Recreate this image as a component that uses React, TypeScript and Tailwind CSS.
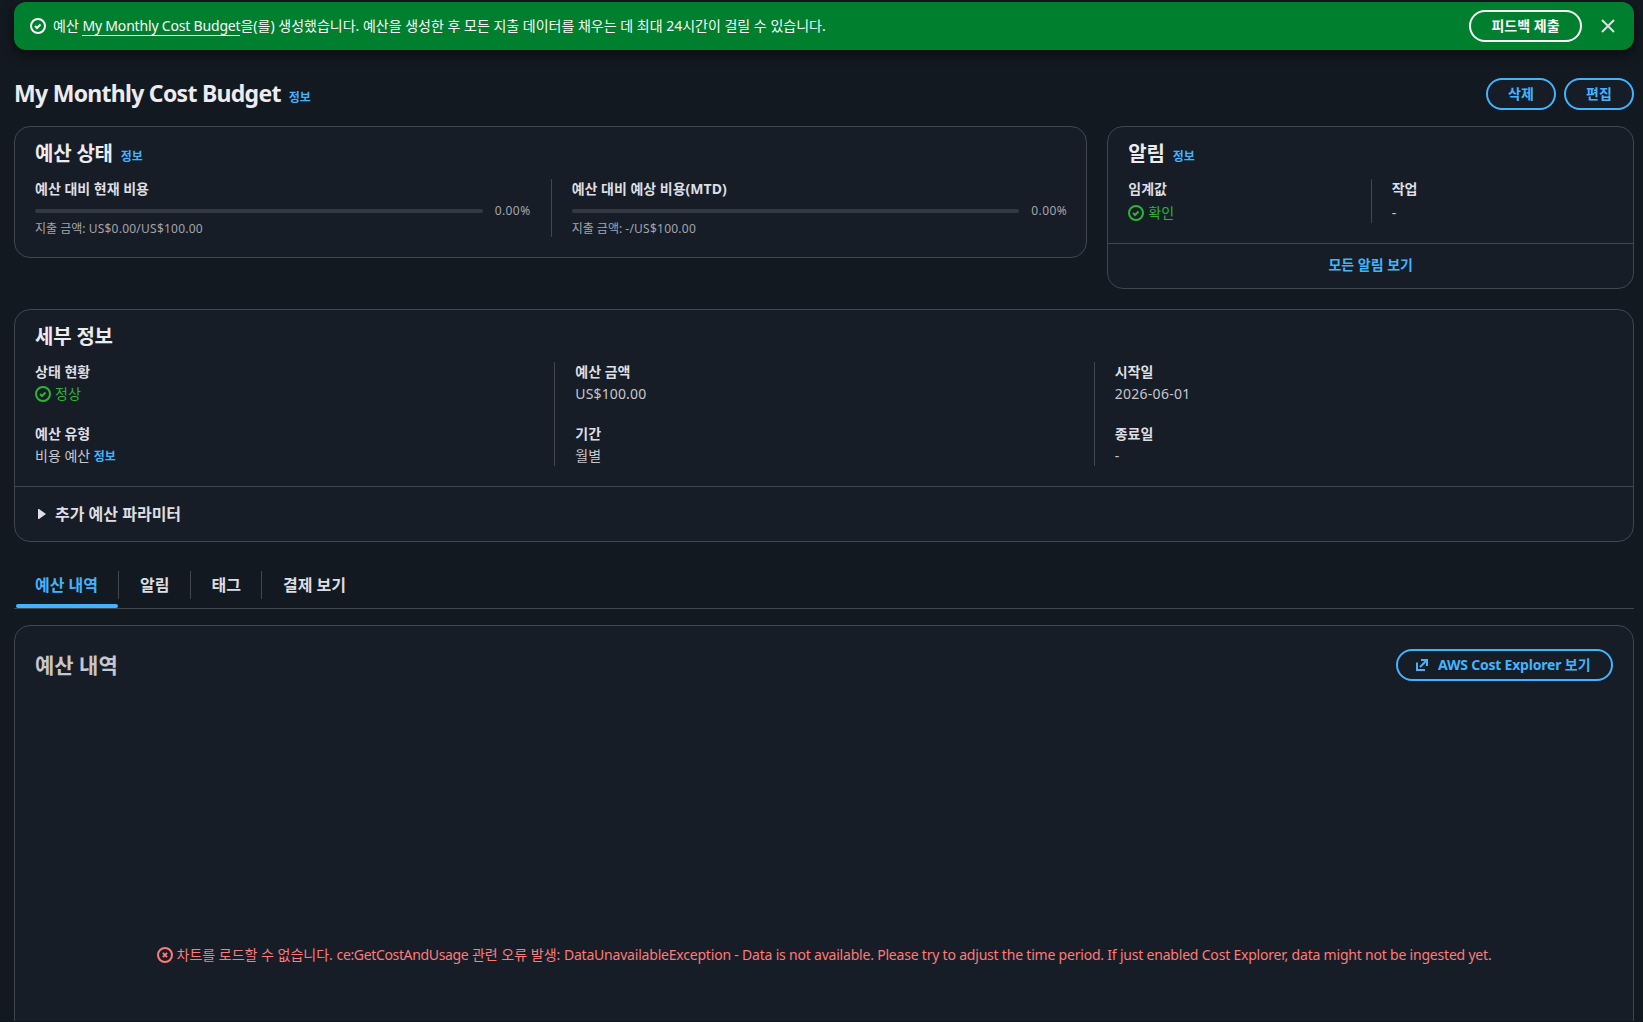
import type { ReactNode } from "react";
import clsx from "clsx";

const StatusOk = ({ className }: { className?: string }) => (
  <svg viewBox="0 0 16 16" className={clsx("h-4 w-4 shrink-0", className)} fill="none" stroke="currentColor" strokeWidth="2">
    <circle cx="8" cy="8" r="7" />
    <path d="m5 8 2 2 3.521-3.521" />
  </svg>
);

const StatusError = () => (
  <svg viewBox="0 0 16 16" className="h-4 w-4 shrink-0" fill="none" stroke="currentColor" strokeWidth="2">
    <circle cx="8" cy="8" r="7" />
    <path d="m10.1 5.9-4.2 4.2M10.1 10.1 5.9 5.9" />
  </svg>
);

const CloseIcon = () => (
  <svg viewBox="0 0 16 16" className="h-4 w-4" fill="none" stroke="currentColor" strokeWidth="2">
    <path d="m2 2 12 12M2 14 14 2" />
  </svg>
);

const ExternalIcon = () => (
  <svg viewBox="0 0 16 16" className="h-4 w-4" fill="none" stroke="currentColor" strokeWidth="2">
    <path d="M7 3h6v6M13 3l-7 7M3 5.5V13h8" />
  </svg>
);

const Info = ({ className }: { className?: string }) => (
  <a className={clsx("text-xs font-bold text-[#42b4ff]", className)}>정보</a>
);

const Button = ({ children, className }: { children: ReactNode; className?: string }) => (
  <button className={clsx("flex h-8 items-center rounded-full border-2 text-sm font-bold whitespace-nowrap", className)}>
    {children}
  </button>
);

const Panel = ({ children, className }: { children: ReactNode; className?: string }) => (
  <section className={clsx("rounded-2xl border border-[#424650] bg-[#161d26]", className)}>{children}</section>
);

const PanelTitle = ({ children, info }: { children: ReactNode; info?: boolean }) => (
  <div className="flex items-baseline gap-2 px-5 pt-[13px]">
    <h2 className="text-xl leading-7 font-bold tracking-[-0.01em] text-[#ebebf0]">{children}</h2>
    {info && <Info />}
  </div>
);

const Column = ({ children, first }: { children: ReactNode; first?: boolean }) => (
  <div className={clsx("border-l", first ? "border-transparent pr-5 pl-[19px]" : "border-[#424650] pr-[19px] pl-5")}>
    {children}
  </div>
);

const Label = ({ children }: { children: ReactNode }) => (
  <div className="text-sm leading-5 font-bold tracking-normal text-[#dedee3]">{children}</div>
);

const Field = ({ label, children }: { label: string; children: ReactNode }) => (
  <div className="flex flex-col gap-0.5">
    <Label>{label}</Label>
    <div className="h-5 text-sm leading-5 text-[#c6c6cd]">{children}</div>
  </div>
);

const Ok = ({ children }: { children: ReactNode }) => (
  <span className="flex items-center gap-1 text-[#2bb534]">
    <StatusOk />
    {children}
  </span>
);

const Usage = ({ label, spent }: { label: string; spent: string }) => (
  <div className="text-xs text-[#a4a4ad]">
    <Label>{label}</Label>
    <div className="flex h-6 items-center gap-3">
      <div className="h-1 flex-1 rounded-sm bg-[#333843]" />
      <span className="w-9 tracking-[0.035em]">0.00%</span>
    </div>
    <div className="h-3.5 leading-[11px]">
      지출 금액: <span className="tracking-[0.02em]">{spent}</span>
    </div>
  </div>
);

const tabs = ["예산 내역", "알림", "태그", "결제 보기"];

const Tabs = () => (
  <div className="mt-[27px] flex h-10 border-b border-[#424650]">
    {tabs.map((tab, i) => (
      <div key={tab} className="relative flex">
        <span className={clsx("flex h-8 items-center pr-5 pl-[21px] text-base font-bold", i === 0 ? "text-[#42b4ff]" : "text-[#dedee3]")}>
          {tab}
        </span>
        {i < tabs.length - 1 && <span className="mt-0.5 h-7 w-px bg-[#424650]" />}
        {i === 0 && <span className="absolute right-px bottom-0 left-0.5 h-1 rounded-sm bg-[#42b4ff]" />}
      </div>
    ))}
  </div>
);

export default function App() {
  return (
    <div className="h-[1022px] overflow-hidden border-b border-[#11151d] bg-[#131920] pt-0.5 pr-[9px] pl-3.5 font-['Noto_Sans','Noto_Sans_CJK_KR',sans-serif] text-sm">
      <div className="flex h-12 items-center rounded-xl bg-[#00802f] pl-4 text-[#f9f9fa] shadow-[0_4px_12px_#0008]">
        <StatusOk />
        <p className="ml-[7px] leading-5">
          예산 <a className="border-b border-current tracking-[-0.013em]">My Monthly Cost Budget</a>을(를) 생성했습니다. 예산을 생성한 후 모든
          지출 데이터를 채우는 데 최대 24시간이 걸릴 수 있습니다.
        </p>
        <Button className="ml-auto w-[113px] justify-center border-[#f9f9fa]">피드백 제출</Button>
        <span className="mr-[18px] ml-[18px] text-[#dedee3]">
          <CloseIcon />
        </span>
      </div>

      <header className="mt-7 flex h-8 items-center gap-2">
        <h1 className="-mt-0.5 flex items-baseline gap-2 text-[23px] leading-8 font-bold tracking-[-0.031em] text-[#ebebf0]">
          My Monthly Cost Budget <Info className="tracking-normal" />
        </h1>
        <Button className="ml-auto w-[70px] justify-center border-[#42b4ff] bg-[#161d26] text-[#42b4ff]">삭제</Button>
        <Button className="w-[70px] justify-center border-[#42b4ff] bg-[#161d26] text-[#42b4ff]">편집</Button>
      </header>

      <div className="mt-4 grid grid-cols-12 items-start gap-5">
        <Panel className="col-span-8 h-[132px]">
          <PanelTitle info>예산 상태</PanelTitle>
          <div className="mt-[11px] grid grid-cols-2">
            <Column first>
              <Usage label="예산 대비 현재 비용" spent="US$0.00/US$100.00" />
            </Column>
            <Column>
              <Usage label="예산 대비 예상 비용(MTD)" spent="-/US$100.00" />
            </Column>
          </div>
        </Panel>
        <Panel className="col-span-4 h-[163px]">
          <PanelTitle info>알림</PanelTitle>
          <div className="mt-[11px] grid grid-cols-2">
            <Column first>
              <Label>임계값</Label>
              <div className="mt-1 h-5">
                <Ok>확인</Ok>
              </div>
            </Column>
            <Column>
              <Label>작업</Label>
              <div className="mt-1 h-5 text-[#c6c6cd]">-</div>
            </Column>
          </div>
          <div className="mt-5 flex h-[43px] items-center justify-center border-t border-[#424650] font-bold text-[#42b4ff]">
            모든 알림 보기
          </div>
        </Panel>
      </div>

      <Panel className="mt-5 h-[233px]">
        <PanelTitle>세부 정보</PanelTitle>
        <div className="mt-[11px] grid grid-cols-3">
          <Column first>
            <div className="flex flex-col gap-5">
              <Field label="상태 현황">
                <Ok>정상</Ok>
              </Field>
              <Field label="예산 유형">
                비용 예산 <Info />
              </Field>
            </div>
          </Column>
          <Column>
            <div className="flex flex-col gap-5">
              <Field label="예산 금액">
                <span className="tracking-[0.01em]">US$100.00</span>
              </Field>
              <Field label="기간">월별</Field>
            </div>
          </Column>
          <Column>
            <div className="flex flex-col gap-5">
              <Field label="시작일">
                <span className="tracking-[0.02em]">2026-06-01</span>
              </Field>
              <Field label="종료일">-</Field>
            </div>
          </Column>
        </div>
        <div className="mt-5 flex h-[54px] items-center border-t border-[#424650] pl-[23px] text-base font-bold text-[#dedee3]">
          <svg viewBox="0 0 8 10" className="mr-[9px] h-2.5 w-2 fill-current">
            <path d="M0 0h1l7 5-7 5H0z" />
          </svg>
          추가 예산 파라미터
        </div>
      </Panel>

      <Tabs />

      <Panel className="mt-4 h-[500px]">
        <div className="flex items-center justify-between px-5 pt-[23px]">
          <h2 className="text-[21px] leading-8 font-bold text-[#c6c6cd]">예산 내역</h2>
          <Button className="w-[217px] gap-2 border-[#42b4ff] pl-4 text-[#42b4ff]">
            <ExternalIcon />
            <span>
              <span className="tracking-[-0.015em]">AWS Cost Explorer</span> 보기
            </span>
          </Button>
        </div>
        <div className="mt-[264px] flex h-5 items-center justify-center gap-1 whitespace-nowrap text-[#ff7a7a]">
          <StatusError />
          <span>
            차트를 로드할 수 없습니다. <span className="tracking-[-0.025em]">ce:GetCostAndUsage</span> 관련 오류 발생:{" "}
            <span className="tracking-[-0.0145em]">
              DataUnavailableException - Data is not available. Please try to adjust the time period. If just enabled Cost Explorer, data
              might not be ingested yet.
            </span>
          </span>
        </div>
      </Panel>
    </div>
  );
}
